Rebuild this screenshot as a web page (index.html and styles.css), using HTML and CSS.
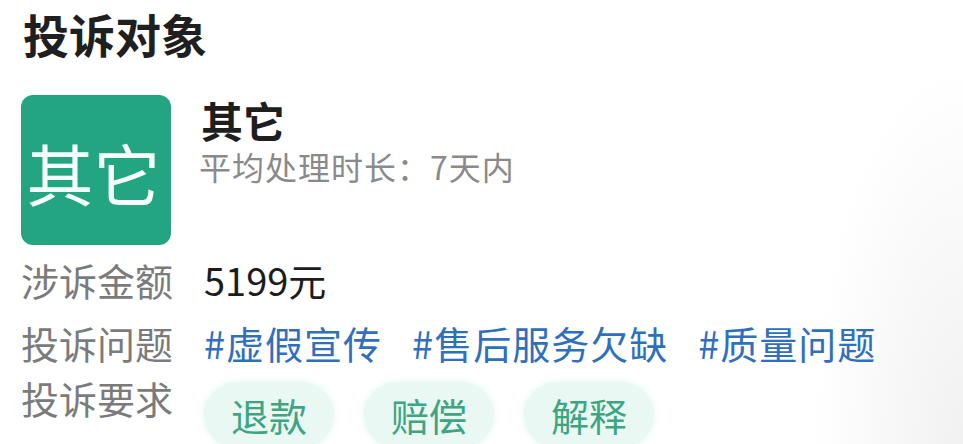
FILE: index.html
```html
<!DOCTYPE html>
<html lang="zh-CN">
<head>
<meta charset="utf-8">
<title>投诉对象</title>
<link rel="stylesheet" href="styles.css">
</head>
<body>
<div class="page">
  <h1 class="title">投诉对象</h1>
  <div class="target">
    <div class="logo">其它</div>
    <div class="info">
      <div class="name">其它</div>
      <div class="meta">平均处理时长：7天内</div>
    </div>
  </div>
  <div class="row row-amount">
    <div class="label">涉诉金额</div>
    <div class="value">5199元</div>
  </div>
  <div class="row row-issues">
    <div class="label">投诉问题</div>
    <div class="tags">
      <span class="tag">#虚假宣传</span>
      <span class="tag">#售后服务欠缺</span>
      <span class="tag">#质量问题</span>
    </div>
  </div>
  <div class="row row-demands">
    <div class="label">投诉要求</div>
    <div class="pills">
      <span class="pill">退款</span>
      <span class="pill">赔偿</span>
      <span class="pill">解释</span>
    </div>
  </div>
</div>
</body>
</html>
```

FILE: styles.css
```css
html, body {
  margin: 0;
  padding: 0;
  height: 100%;
}
body {
  background: #ffffff radial-gradient(ellipse 150px 380px at 100% 100%, #f1f1f1 0%, rgba(255,255,255,0) 100%) no-repeat;
  font-family: "Noto Sans CJK SC", "Noto Sans", sans-serif;
  overflow: hidden;
}
.page {
  padding-left: 21px;
  padding-top: 0;
}
.title {
  margin: 0;
  padding-left: 2px;
  font-size: 46px;
  line-height: 67px;
  font-weight: 700;
  color: #1f1f1f;
}
.target {
  display: flex;
  align-items: flex-start;
  margin-top: 28px;
}
.logo {
  flex: none;
  width: 150px;
  height: 150px;
  border-radius: 12px;
  background: #23a581;
  color: #f4fffb;
  font-size: 67px;
  line-height: 67px;
  display: flex;
  align-items: center;
  justify-content: center;
  box-sizing: border-box;
  padding-right: 5px;
  padding-top: 2px;
}
.info {
  margin-left: 30px;
}
.name {
  font-size: 42px;
  line-height: 50px;
  font-weight: 700;
  color: #1e1e1e;
}
.meta {
  margin-top: 1px;
  margin-left: -2px;
  font-size: 32px;
  line-height: 40px;
  letter-spacing: 1px;
  color: #8a8a8a;
}
.row {
  display: flex;
  align-items: flex-start;
  font-size: 38px;
  line-height: 38px;
}
.row-amount { margin-top: 16px; }
.row-issues { margin-top: 25px; }
.row-demands { margin-top: 17px; }
.label {
  flex: none;
  width: 183px;
  color: #7b7b7b;
}
.value {
  color: #1c1c1c;
}
.tags {
  display: flex;
  gap: 30px;
  white-space: nowrap;
}
.tag {
  color: #2f6fbd;
  letter-spacing: 1px;
}
.pills {
  display: flex;
  gap: 30px;
  margin-top: 3px;
}
.pill {
  padding: 14px 27px;
  border-radius: 33px;
  background: #e9f8f3;
  box-shadow: 0 0 6px 2px #eefaf6;
  color: #3ea583;
  white-space: nowrap;
}
```
